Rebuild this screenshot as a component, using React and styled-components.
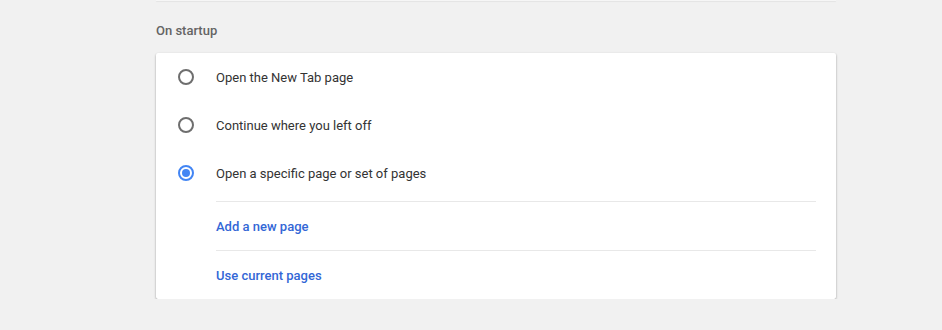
import React, { useState } from 'react';
import styled, { createGlobalStyle } from 'styled-components';

const Global = createGlobalStyle`
  html, body {
    margin: 0;
    padding: 0;
    background: #f1f1f1;
    font-family: Roboto, "Liberation Sans", Arial, sans-serif;
  }
`;

const Page = styled.div`
  width: 680px;
  margin-left: 156px;
`;

const PrevCard = styled.div`
  height: 1px;
  background: #f6f6f6;
  box-shadow: 0 1px 1px rgba(0, 0, 0, 0.06);
`;

const Heading = styled.h2`
  margin: 21px 0 13px;
  font-size: 13px;
  line-height: 18px;
  font-weight: 500;
  color: #646464;
`;

const Card = styled.div`
  background: #fff;
  border-radius: 2px;
  box-shadow: 0 1px 2px rgba(0, 0, 0, 0.3), 0 1px 3px rgba(0, 0, 0, 0.1);
`;

const RadioGroup = styled.div`
  display: flex;
  flex-direction: column;
  padding-bottom: 4px;
`;

const RadioRow = styled.label`
  display: flex;
  align-items: center;
  height: 48px;
  padding-left: 22px;
  cursor: pointer;
  font-size: 13px;
  color: #333;
`;

const Radio = styled.span`
  box-sizing: border-box;
  width: 16px;
  height: 16px;
  border-radius: 50%;
  border: 2px solid ${({ $checked }) => ($checked ? '#4285f4' : '#6e6e6e')};
  display: flex;
  align-items: center;
  justify-content: center;
  margin-right: 22px;

  &::after {
    content: '';
    width: 8px;
    height: 8px;
    border-radius: 50%;
    background: #4285f4;
    display: ${({ $checked }) => ($checked ? 'block' : 'none')};
  }
`;

const Links = styled.div`
  margin: 0 20px 0 60px;
`;

const LinkRow = styled.div`
  display: flex;
  align-items: center;
  height: 48px;
  border-top: 1px solid #e8e8e8;
`;

const Link = styled.a`
  color: #3367d6;
  font-size: 13px;
  font-weight: 500;
  text-decoration: none;
  cursor: pointer;
`;

const options = [
  'Open the New Tab page',
  'Continue where you left off',
  'Open a specific page or set of pages',
];

const App = () => {
  const [selected, setSelected] = useState(2);

  return (
    <>
      <Global />
      <Page>
        <PrevCard />
        <Heading>On startup</Heading>
        <Card>
          <RadioGroup>
            {options.map((label, i) => (
              <RadioRow key={label} onClick={() => setSelected(i)}>
                <Radio $checked={selected === i} />
                {label}
              </RadioRow>
            ))}
          </RadioGroup>
          <Links>
            <LinkRow>
              <Link>Add a new page</Link>
            </LinkRow>
            <LinkRow>
              <Link>Use current pages</Link>
            </LinkRow>
          </Links>
        </Card>
      </Page>
    </>
  );
};

export default App;
